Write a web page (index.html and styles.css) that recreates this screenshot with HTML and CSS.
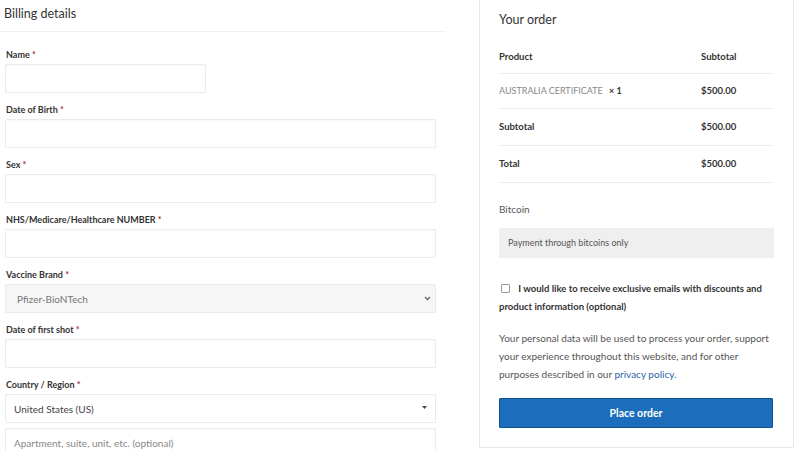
FILE: index.html
```html
<!DOCTYPE html>
<html lang="en">
<head>
<meta charset="utf-8">
<title>Checkout</title>
<link rel="stylesheet" href="styles.css">
</head>
<body>
<div class="page">
  <section class="billing">
    <h3 class="billing-title">Billing details</h3>
    <div class="field">
      <label class="label">Name <span class="req">*</span></label>
      <input class="input input-short" type="text">
    </div>
    <div class="field">
      <label class="label">Date of Birth <span class="req">*</span></label>
      <input class="input" type="text">
    </div>
    <div class="field">
      <label class="label">Sex <span class="req">*</span></label>
      <input class="input" type="text">
    </div>
    <div class="field">
      <label class="label">NHS/Medicare/Healthcare NUMBER <span class="req">*</span></label>
      <input class="input" type="text">
    </div>
    <div class="field">
      <label class="label">Vaccine Brand <span class="req">*</span></label>
      <div class="select select-grey">
        <span class="select-value">Pfizer-BioNTech</span>
        <svg class="chev" width="7" height="5" viewBox="0 0 7 5"><path d="M1 1 L3.5 3.5 L6 1" fill="none" stroke="#666" stroke-width="1.3"/></svg>
      </div>
    </div>
    <div class="field">
      <label class="label">Date of first shot <span class="req">*</span></label>
      <input class="input" type="text">
    </div>
    <div class="field field-tight">
      <label class="label">Country / Region <span class="req">*</span></label>
      <div class="select">
        <span class="select-value dark">United States (US)</span>
        <svg class="tri" width="5" height="3" viewBox="0 0 5 3"><path d="M0 0 L5 0 L2.5 3 Z" fill="#444"/></svg>
      </div>
    </div>
    <div class="field">
      <input class="input" type="text" placeholder="Apartment, suite, unit, etc. (optional)">
    </div>
  </section>

  <aside class="order">
    <h3 class="order-title">Your order</h3>
    <table class="order-table">
      <thead>
        <tr><th class="col-product">Product</th><th class="col-total">Subtotal</th></tr>
      </thead>
      <tbody>
        <tr class="item"><td class="product-name">AUSTRALIA CERTIFICATE <strong class="qty">× 1</strong></td><td class="amount">$500.00</td></tr>
        <tr class="sub"><th>Subtotal</th><td class="amount">$500.00</td></tr>
        <tr class="total"><th>Total</th><td class="amount">$500.00</td></tr>
      </tbody>
    </table>

    <div class="payment">
      <div class="method">Bitcoin</div>
      <div class="method-box">Payment through bitcoins only</div>
    </div>

    <label class="optin">
      <span class="checkbox"></span>
      <span class="optin-text">I would like to receive exclusive emails with discounts and product information (optional)</span>
    </label>

    <p class="privacy">Your personal data will be used to process your order, support your experience throughout this website, and for other purposes described in our <a class="link" href="#">privacy policy</a>.</p>

    <button class="place-order" type="button">Place order</button>
  </aside>
</div>
</body>
</html>
```

FILE: styles.css
```css
* { box-sizing: border-box; }

html, body {
  margin: 0;
  padding: 0;
  background: #fff;
}

body {
  font-family: "Lato", "Open Sans", "Liberation Sans", sans-serif;
  color: #444;
  width: 800px;
  height: 450px;
  overflow: hidden;
}

.page {
  display: flex;
  align-items: flex-start;
}

/* ---------- Billing ---------- */
.billing {
  width: 446px;
  flex: none;
}

.billing-title {
  margin: 0;
  height: 32px;
  padding: 6px 0 0 4px;
  font-size: 12.5px;
  font-weight: 400;
  line-height: 16px;
  color: #333;
  border-bottom: 1px solid #f0f0f0;
  margin-bottom: 17px;
}

.field {
  display: flex;
  flex-direction: column;
  align-items: flex-start;
  margin-bottom: 11px;
}

.field-tight {
  margin-bottom: 5px;
}

.label {
  display: block;
  font-size: 9px;
  font-weight: 700;
  line-height: 12px;
  color: #333;
  padding-left: 6px;
  margin-bottom: 3px;
}

.req {
  color: #a33;
}

.input {
  display: block;
  margin: 0 0 0 5px;
  width: 431px;
  height: 29px;
  border: 1px solid #ebebeb;
  border-radius: 1px;
  background: #fff;
  box-shadow: inset 0 1px 2px rgba(0,0,0,0.03);
  font-family: inherit;
  font-size: 10px;
  color: #555;
  padding: 0 8px;
  outline: none;
}

.input::placeholder {
  color: #888;
}

.input-short {
  width: 201px;
}

.select {
  margin-left: 5px;
  width: 431px;
  height: 29px;
  border: 1px solid #ebebeb;
  border-radius: 1px;
  background: #fff;
  display: flex;
  align-items: center;
  justify-content: space-between;
  padding: 0 8px 0 8px;
}

.select-grey {
  background: #f6f6f6;
  padding-left: 11px;
  padding-right: 4px;
}

.select-value {
  font-size: 10px;
  color: #777;
}

.select-value.dark {
  color: #444;
}

.chev { display: block; }
.tri { display: block; margin-top: -3px; }

/* ---------- Order ---------- */
.order {
  margin-left: 33px;
  width: 315px;
  flex: none;
  height: 448px;
  border: 1px solid #e8e8e8;
  border-top: none;
  padding: 0 19px 0 19px;
}

.order-title {
  margin: 0;
  padding-top: 12px;
  font-size: 12.5px;
  font-weight: 400;
  line-height: 16px;
  color: #333;
  margin-bottom: 12px;
}

.order-table {
  width: 274px;
  border-collapse: collapse;
  font-size: 9.5px;
  color: #333;
}

.order-table th,
.order-table td {
  text-align: left;
  padding: 0;
  border-bottom: 1px solid #ececec;
  vertical-align: middle;
}

.order-table thead th {
  height: 33px;
  font-weight: 700;
}

.col-total { width: 72px; }

.order-table .item td { height: 35px; }
.order-table .sub th,
.order-table .sub td,
.order-table .total th,
.order-table .total td { height: 37px; }

.order-table tbody th { font-weight: 700; }

.product-name {
  color: #888;
  font-size: 9px;
}

.qty {
  color: #333;
  font-weight: 700;
  margin-left: 4px;
}

.amount {
  font-weight: 700;
}

.payment {
  margin-top: 19px;
}

.method {
  font-size: 10px;
  line-height: 14px;
  color: #555;
}

.method-box {
  margin-top: 12px;
  height: 30px;
  background: #efefef;
  font-size: 9px;
  color: #555;
  display: flex;
  align-items: center;
  padding-left: 9px;
}

.optin {
  display: block;
  margin-top: 22px;
  font-size: 9.5px;
  font-weight: 700;
  line-height: 18px;
  color: #333;
}

.checkbox {
  display: inline-block;
  width: 9px;
  height: 9px;
  border: 1px solid #9a9a9a;
  border-radius: 1px;
  vertical-align: -1px;
  margin: 0 6px 0 2px;
}

.privacy {
  margin: 13px 0 0 0;
  font-size: 10px;
  line-height: 18px;
  color: #555;
}

.link {
  color: #2a62a6;
  text-decoration: none;
}

.place-order {
  display: block;
  margin-top: 15px;
  width: 274px;
  height: 30px;
  background: #1c6ebd;
  border: 1px solid #0f518f;
  border-radius: 1px;
  color: #fff;
  font-family: inherit;
  font-size: 10.5px;
  font-weight: 700;
}
```
